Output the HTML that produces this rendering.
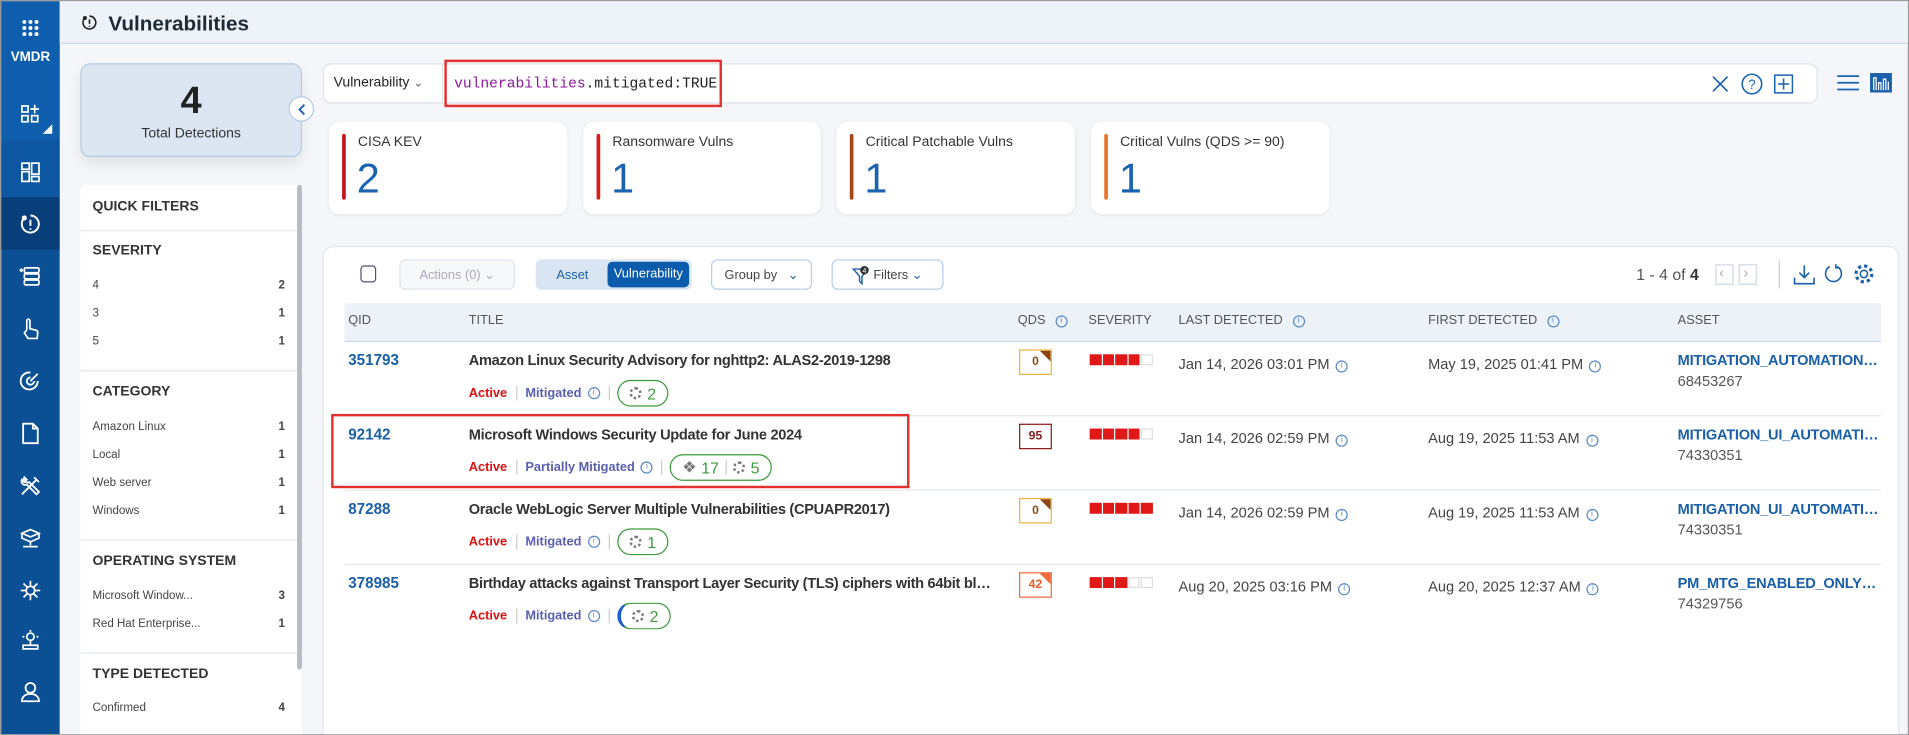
<!DOCTYPE html>
<html><head><meta charset="utf-8"><style>
*{box-sizing:border-box;margin:0;padding:0}
html,body{width:1909px;height:735px;overflow:hidden;background:#f4f6f9}
#w{position:absolute;left:0;top:0;width:1568px;height:604px;transform:scale(1.21747);transform-origin:0 0;font-family:"Liberation Sans",sans-serif;color:#333;background:#f4f6f9;border:1px solid #9a9a9a;overflow:hidden}
.a{position:absolute}
.sb{left:0;top:0;width:48px;height:604px;background:#0b4f94}
.ic{position:absolute;left:14px;width:20px;height:20px}
.hd{left:48px;top:0;width:1520px;height:35px;background:#eef3f9;border-bottom:1px solid #c9d9ec}
.card{background:#fff;border-radius:9px;box-shadow:0 1px 3px rgba(0,0,0,.08)}
.qf{font-size:10px;color:#444}
.qf .h{font-size:11.5px;font-weight:bold;color:#333;position:absolute;left:10px}
.qf .r{position:absolute;left:10px;right:14px;display:flex;justify-content:space-between;font-size:9.5px;color:#444}
.qf .r b{font-weight:bold}
.sep{position:absolute;left:0;right:4px;height:1px;background:#e5e8ec}
.kc .bar{position:absolute;left:11px;top:10px;width:3px;height:54px;border-radius:2px}
.kc .t{position:absolute;left:24px;top:11px;font-size:11.5px;color:#333}
.kc .n{position:absolute;left:23px;top:28px;font-size:34px;color:#1a63b0}
.th{font-size:10.5px;color:#555;position:absolute;top:256px}
.row{position:absolute;left:282px;width:1262px;height:61px;border-bottom:1px solid #e3e7ec}
.row .q{position:absolute;left:3px;top:8px;font-size:12.5px;font-weight:bold;color:#1a5fa8}
.row .ti{position:absolute;left:102px;top:8px;font-size:12px;font-weight:bold;color:#333;white-space:nowrap;letter-spacing:-.25px}
.row .st{position:absolute;left:102px;top:31px;font-size:10.5px;display:flex;align-items:center;white-space:nowrap}
.act{color:#e01010;font-weight:bold}
.mit{color:#5b5fb0;font-weight:bold}
.vs{display:inline-block;width:1px;height:12px;background:#ccc;margin:0 7px}
.pill{display:inline-flex;align-items:center;border:1px solid #3c9a3c;border-radius:12px;height:22px;padding:0 9px;color:#3c9a3c;font-size:13px;margin-left:2px}
.gear{display:inline-block;width:10px;height:10px;border:2px dotted #777;border-radius:50%;margin-right:5px}
.qds{position:absolute;left:554px;top:6px;width:27px;height:21px;border:1px solid;font-size:10px;font-weight:bold;text-align:center;line-height:19px;overflow:hidden}
.sev{position:absolute;left:612px;top:10px;display:flex;gap:1px}
.sev i{display:block;width:9.6px;height:9px;background:#e01818}
.sev i.e{background:#fff;border:1px solid #ddd}
.dt{position:absolute;top:11px;font-size:12px;color:#444;white-space:nowrap}
.inf{display:inline-block;width:10px;height:10px;border:1px solid #5a8ac6;border-radius:50%;font-size:7px;line-height:8px;text-align:center;color:#5a8ac6;margin-left:5px;vertical-align:1px;font-style:normal}
.as{position:absolute;left:1095px;top:8px;font-size:12px;font-weight:bold;color:#1a5fa8;white-space:nowrap;width:166px;overflow:hidden;text-overflow:ellipsis;letter-spacing:-.2px}
.an{position:absolute;left:1095px;top:25px;font-size:12px;color:#555}
.btn{position:absolute;top:212px;height:25px;border:1px solid #b9cde3;border-radius:5px;font-size:10.5px;display:flex;align-items:center;justify-content:center;color:#444;background:#fff}
</style></head><body><div id="w">
<div class="a sb">
 <div class="a" style="left:0;top:0;width:48px;height:115px;background:#0f5eae"></div>
 <div class="a" style="left:0;top:115px;width:48px;height:46px;background:#0c56a2"></div>
 <div class="a" style="left:0;top:161px;width:48px;height:43px;background:#083e7a"></div>
 <svg class="a" style="left:16px;top:14px" width="16" height="16" fill="#fff"><circle cx="3" cy="3" r="1.6"/><circle cx="8" cy="3" r="1.6"/><circle cx="13" cy="3" r="1.6"/><circle cx="3" cy="8" r="1.6"/><circle cx="8" cy="8" r="1.6"/><circle cx="13" cy="8" r="1.6"/><circle cx="3" cy="13" r="1.6"/><circle cx="8" cy="13" r="1.6"/><circle cx="13" cy="13" r="1.6"/></svg>
 <div class="a" style="left:0;top:40px;width:48px;text-align:center;color:#fff;font-weight:bold;font-size:11px">VMDR</div>
 <svg class="ic" style="top:83px" viewBox="0 0 20 20" fill="none" stroke="#fff" stroke-width="1.4"><rect x="3" y="3" width="5" height="5"/><rect x="3" y="11" width="5" height="5"/><rect x="11" y="11" width="5" height="5"/><path d="M13.5 2v7M10 5.5h7"/></svg>
 <svg class="a" style="left:34px;top:101px" width="8" height="8"><path d="M8 0V8H0Z" fill="#fff"/></svg>
 <svg class="ic" style="top:130px" viewBox="0 0 20 20" fill="none" stroke="#fff" stroke-width="1.4"><rect x="3" y="3" width="6" height="5"/><rect x="3" y="10" width="6" height="8"/><rect x="11" y="3" width="6" height="9"/><rect x="11" y="14" width="6" height="4"/></svg>
 <svg class="ic" style="top:173px" viewBox="0 0 20 20" fill="none" stroke="#fff" stroke-width="1.6"><path d="M5 5A7 7 0 1 0 10 3"/><circle cx="5" cy="5" r="1.3" fill="#fff"/><path d="M10 6.5v5M10 13.5v1.2"/></svg>
 <svg class="ic" style="top:216px" viewBox="0 0 20 20" fill="none" stroke="#fff" stroke-width="1.4"><rect x="5" y="3" width="12" height="4" rx="1"/><rect x="5" y="8" width="12" height="4" rx="1"/><rect x="5" y="13" width="12" height="4" rx="1"/><path d="M1 5h3M2.5 3.5v3"/></svg>
 <svg class="ic" style="top:259px" viewBox="0 0 20 20" fill="none" stroke="#fff" stroke-width="1.4"><path d="M7 11V3.5a1.3 1.3 0 0 1 2.6 0V10l5 1.2c1 .3 1.5 1 1.4 2L15.5 18H8l-3-4.5 2-2.5"/></svg>
 <svg class="ic" style="top:302px" viewBox="0 0 20 20" fill="none" stroke="#fff" stroke-width="1.5"><path d="M16 10a7 7 0 1 1-6-7"/><path d="M13 10a3 3 0 1 1-3-3"/><path d="M10 10l6-6"/></svg>
 <svg class="ic" style="top:345px" viewBox="0 0 20 20" fill="none" stroke="#fff" stroke-width="1.5"><path d="M4 2h8l4 4v12H4z"/><path d="M12 2v4h4"/></svg>
 <svg class="ic" style="top:388px" viewBox="0 0 20 20" fill="none" stroke="#fff" stroke-width="1.5"><path d="M3 17L12 8M5 3a3 3 0 0 0 4 4l8 8-2 2-8-8a3 3 0 0 1-4-4l2 2 2-2z"/><path d="M13 3l4 4M15 5L9 11"/></svg>
 <svg class="ic" style="top:431px" viewBox="0 0 20 20" fill="none" stroke="#fff" stroke-width="1.4"><path d="M3 6l7-3 7 3-7 3z M3 6v4l7 3 7-3V6"/><path d="M10 13v3M4 17h12"/></svg>
 <svg class="ic" style="top:474px" viewBox="0 0 20 20" fill="none" stroke="#fff" stroke-width="1.4"><circle cx="10" cy="10" r="3.5"/><path d="M10 2v4.5M10 13.5V18M2 10h4.5M13.5 10H18M4.3 4.3l3.2 3.2M12.5 12.5l3.2 3.2M15.7 4.3l-3.2 3.2M7.5 12.5l-3.2 3.2"/></svg>
 <svg class="ic" style="top:515px" viewBox="0 0 20 20" fill="none" stroke="#fff" stroke-width="1.4"><circle cx="10" cy="7" r="3"/><path d="M10 1.5v1.5M5 7H3.5M16.5 7H15M10 10v4M4 14h12v3H4z"/></svg>
 <svg class="ic" style="top:557px" viewBox="0 0 20 20" fill="none" stroke="#fff" stroke-width="1.5"><circle cx="10" cy="7" r="4"/><path d="M3 18c0-4 3-6 7-6s7 2 7 6z"/></svg>
</div>
<div class="a hd">
 <svg class="a" style="left:17px;top:10px" width="15" height="15" viewBox="0 0 20 20" fill="none" stroke="#222" stroke-width="1.8"><path d="M5 5A7 7 0 1 0 10 3"/><circle cx="5" cy="5" r="1.3" fill="#222"/><path d="M10 6.5v5M10 13.5v1.2"/></svg>
 <div class="a" style="left:40px;top:9px;font-size:17px;font-weight:bold;color:#1f2a36">Vulnerabilities</div>
</div>
<div class="a" style="left:65px;top:51px;width:182px;height:77px;background:#dbe6f2;border:1px solid #b6cbe2;border-radius:8px;box-shadow:0 6px 10px rgba(0,0,0,.08)">
 <div class="a" style="left:0;width:180px;top:12px;text-align:center;font-size:31px;font-weight:bold;color:#222">4</div>
 <div class="a" style="left:0;width:180px;top:51px;text-align:center;font-size:11.5px;color:#333">Total Detections</div>
</div>
<div class="a" style="left:236px;top:78px;width:21px;height:21px;border-radius:50%;background:#fff;border:1px solid #b6cbe2"><svg class="a" style="left:6px;top:5px" width="8" height="10"><path d="M6 1L2 5l4 4" fill="none" stroke="#1a5fa8" stroke-width="1.5"/></svg></div>
<div class="a qf" style="left:65px;top:151px;width:182px;height:460px;background:#fff;border-radius:6px 6px 0 0">
 <div class="a" style="left:178px;top:0;width:4px;height:398px;background:#b5bcc4;border-radius:2px"></div>
 <div class="h" style="top:12px">QUICK FILTERS</div>
 <div class="sep" style="top:37px"></div>
 <div class="h" style="top:48px">SEVERITY</div>
 <div class="r" style="top:77px"><span>4</span><b>2</b></div>
 <div class="r" style="top:100px"><span>3</span><b>1</b></div>
 <div class="r" style="top:123px"><span>5</span><b>1</b></div>
 <div class="sep" style="top:152px"></div>
 <div class="h" style="top:164px">CATEGORY</div>
 <div class="r" style="top:193px"><span>Amazon Linux</span><b>1</b></div>
 <div class="r" style="top:216px"><span>Local</span><b>1</b></div>
 <div class="r" style="top:239px"><span>Web server</span><b>1</b></div>
 <div class="r" style="top:262px"><span>Windows</span><b>1</b></div>
 <div class="sep" style="top:291px"></div>
 <div class="h" style="top:303px">OPERATING SYSTEM</div>
 <div class="r" style="top:332px"><span>Microsoft Window...</span><b>3</b></div>
 <div class="r" style="top:355px"><span>Red Hat Enterprise...</span><b>1</b></div>
 <div class="sep" style="top:384px"></div>
 <div class="h" style="top:396px">TYPE DETECTED</div>
 <div class="r" style="top:424px"><span>Confirmed</span><b>4</b></div>
</div>
<div class="a" style="left:264px;top:51px;width:1228px;height:33px;background:#fff;border:1px solid #dde3ea;border-radius:7px">
 <div class="a" style="left:8px;top:9px;font-size:11.5px;color:#222">Vulnerability <span style="color:#666;font-size:10px">&#8964;</span></div>
 <div class="a" style="left:97px;top:0;width:1px;height:31px;background:#dde3ea"></div>
 <svg class="a" style="left:1140px;top:9px" width="14" height="14"><path d="M1 1l12 12M13 1L1 13" stroke="#1a63b0" stroke-width="1.4"/></svg>
 <svg class="a" style="left:1164px;top:7px" width="18" height="18" viewBox="0 0 18 18"><circle cx="9" cy="9" r="8" fill="none" stroke="#1a63b0" stroke-width="1.3"/><text x="9" y="13" text-anchor="middle" font-size="11" font-family="Liberation Sans" fill="#1a63b0">?</text></svg>
 <svg class="a" style="left:1191px;top:8px" width="16" height="16"><rect x=".7" y=".7" width="14.6" height="14.6" fill="none" stroke="#1a63b0" stroke-width="1.3"/><path d="M8 3.5v9M3.5 8h9" stroke="#1a63b0" stroke-width="1.3"/></svg>
</div>
<div class="a" style="left:364px;top:48px;width:228px;height:39px;border:2px solid #e53030"></div>
<div class="a" style="left:372px;top:61px;font-family:'Liberation Mono',monospace;font-size:12px;color:#222"><span style="color:#8a1a9a">vulnerabilities</span>.mitigated:TRUE</div>
<svg class="a" style="left:1508px;top:60px" width="18" height="14"><path d="M0 1.5h18M0 7h18M0 12.5h18" stroke="#1a63b0" stroke-width="1.4"/></svg>
<svg class="a" style="left:1535px;top:59px" width="18" height="16"><rect width="18" height="16" fill="#1a5fa8"/><path d="M3 14V4h2v10M7 14V8h2v6M11 14V5h2v9M15 14V7" stroke="#fff" stroke-width="1" fill="none"/></svg>
<div class="a card kc" style="left:269px;top:99px;width:196px;height:76px"><div class="bar" style="background:#c0141a"></div><div class="t">CISA KEV</div><div class="n">2</div></div>
<div class="a card kc" style="left:478px;top:99px;width:195px;height:76px"><div class="bar" style="background:#d91c1c"></div><div class="t">Ransomware Vulns</div><div class="n">1</div></div>
<div class="a card kc" style="left:686px;top:99px;width:196px;height:76px"><div class="bar" style="background:#a2461e"></div><div class="t">Critical Patchable Vulns</div><div class="n">1</div></div>
<div class="a card kc" style="left:895px;top:99px;width:196px;height:76px"><div class="bar" style="background:#e9722a"></div><div class="t">Critical Vulns (QDS &gt;= 90)</div><div class="n">1</div></div>
<div class="a" style="left:264px;top:201px;width:1295px;height:410px;background:#fff;border:1px solid #e1e6ec;border-radius:9px"></div>
<div class="a" style="left:295px;top:217px;width:13px;height:14px;border:1.3px solid #556;border-radius:3px"></div>
<div class="btn" style="left:327px;width:95px;background:#f6f8fa;border-color:#dfe4ea;color:#aab"><span>Actions (0) &#8964;</span></div>
<div class="btn" style="left:439px;width:128px;background:#d9e5f2;border-color:#d9e5f2;justify-content:flex-start">
 <span style="margin-left:16px;color:#1a5fa8">Asset</span>
 <span class="a" style="left:58px;top:1px;width:67px;height:21px;background:#0b5cad;color:#fff;border-radius:4px;text-align:center;line-height:21px">Vulnerability</span>
</div>
<div class="btn" style="left:583px;width:83px"><span>Group by &nbsp; <span style="color:#1a5fa8">&#8964;</span></span></div>
<div class="btn" style="left:682px;width:92px"><svg width="14" height="16" style="margin-right:3px"><path d="M1 3h12L8 9v6l-2-2V9z" fill="none" stroke="#1a5fa8" stroke-width="1.2"/><circle cx="10" cy="4" r="3.5" fill="#333"/><text x="10" y="6.3" font-size="6" fill="#fff" text-anchor="middle" font-family="Liberation Sans">4</text></svg><span>Filters <span style="color:#1a5fa8">&#8964;</span></span></div>
<div class="a" style="left:1343px;top:217px;font-size:13px;color:#555">1 - 4 of <b style="color:#333">4</b></div>
<div class="a" style="left:1408px;top:216px;width:15px;height:17px;border:1px solid #cfd8e2"></div>
<div class="a" style="left:1427px;top:216px;width:15px;height:17px;border:1px solid #cfd8e2"></div>
<div class="a" style="left:1411px;top:216px;font-size:12px;color:#aab">&lsaquo;</div><div class="a" style="left:1431px;top:216px;font-size:12px;color:#aab">&rsaquo;</div>
<div class="a" style="left:1460px;top:213px;width:1px;height:23px;background:#ccd"></div>
<svg class="a" style="left:1472px;top:216px" width="18" height="17"><path d="M9 1v10M5 7l4 4 4-4M1 11v5h16v-5" fill="none" stroke="#1a5fa8" stroke-width="1.3"/></svg>
<svg class="a" style="left:1497px;top:215px" width="16" height="18"><path d="M11 3a6.5 6.5 0 1 1-6 0M10 1v3h3" fill="none" stroke="#1a5fa8" stroke-width="1.3"/></svg>
<svg class="a" style="left:1521px;top:215px" width="18" height="18" viewBox="0 0 18 18"><circle cx="9" cy="9" r="3" fill="none" stroke="#1a5fa8" stroke-width="1.3"/><circle cx="9" cy="9" r="6.5" fill="none" stroke="#1a5fa8" stroke-width="2.6" stroke-dasharray="2.6 2.5"/></svg>
<div class="a" style="left:282px;top:248px;width:1262px;height:32px;background:#edf2f9;border-bottom:1px solid #c9d9ec"></div>
<div class="th" style="left:285px">QID</div>
<div class="th" style="left:384px">TITLE</div>
<div class="th" style="left:835px">QDS <i class="inf">i</i></div>
<div class="th" style="left:893px">SEVERITY</div>
<div class="th" style="left:967px">LAST DETECTED <i class="inf">i</i></div>
<div class="th" style="left:1172px">FIRST DETECTED <i class="inf">i</i></div>
<div class="th" style="left:1377px">ASSET</div>
<div class="row" style="top:280px">
 <div class="q">351793</div><div class="ti">Amazon Linux Security Advisory for nghttp2: ALAS2-2019-1298</div>
 <div class="st"><span class="act">Active</span><span class="vs"></span><span class="mit">Mitigated</span><i class="inf">i</i><span class="vs" style="margin-right:4px"></span><span class="pill"><span class="gear"></span>2</span></div>
 <div class="qds" style="border-color:#f2b23a;color:#8a4a1a">0<svg class="a" style="right:0;top:0" width="9" height="9"><path d="M0 0h9v9z" fill="#8b4513"/></svg></div>
 <div class="sev"><i></i><i></i><i></i><i></i><i class="e"></i></div>
 <div class="dt" style="left:685px">Jan 14, 2026 03:01 PM<i class="inf">i</i></div>
 <div class="dt" style="left:890px">May 19, 2025 01:41 PM<i class="inf">i</i></div>
 <div class="as">MITIGATION_AUTOMATION_INSTANCE</div><div class="an">68453267</div>
</div>
<div class="row" style="top:341px">
 <div class="q">92142</div><div class="ti">Microsoft Windows Security Update for June 2024</div>
 <div class="st"><span class="act">Active</span><span class="vs"></span><span class="mit">Partially Mitigated</span><i class="inf">i</i><span class="vs" style="margin-right:4px"></span><span class="pill"><span style="color:#777;margin-right:4px">&#10070;</span>17<span class="vs" style="margin:0 5px"></span><span class="gear"></span>5</span></div>
 <div class="qds" style="border-color:#8b1a1a;color:#8b1a1a">95</div>
 <div class="sev"><i></i><i></i><i></i><i></i><i class="e"></i></div>
 <div class="dt" style="left:685px">Jan 14, 2026 02:59 PM<i class="inf">i</i></div>
 <div class="dt" style="left:890px">Aug 19, 2025 11:53 AM<i class="inf">i</i></div>
 <div class="as">MITIGATION_UI_AUTOMATION_HOST</div><div class="an">74330351</div>
</div>
<div class="row" style="top:402px">
 <div class="q">87288</div><div class="ti">Oracle WebLogic Server Multiple Vulnerabilities (CPUAPR2017)</div>
 <div class="st"><span class="act">Active</span><span class="vs"></span><span class="mit">Mitigated</span><i class="inf">i</i><span class="vs" style="margin-right:4px"></span><span class="pill"><span class="gear"></span>1</span></div>
 <div class="qds" style="border-color:#f2b23a;color:#8a4a1a">0<svg class="a" style="right:0;top:0" width="9" height="9"><path d="M0 0h9v9z" fill="#8b4513"/></svg></div>
 <div class="sev"><i></i><i></i><i></i><i></i><i></i></div>
 <div class="dt" style="left:685px">Jan 14, 2026 02:59 PM<i class="inf">i</i></div>
 <div class="dt" style="left:890px">Aug 19, 2025 11:53 AM<i class="inf">i</i></div>
 <div class="as">MITIGATION_UI_AUTOMATION_HOST</div><div class="an">74330351</div>
</div>
<div class="row" style="top:463px;border-bottom:none">
 <div class="q">378985</div><div class="ti" style="width:430px;overflow:hidden;text-overflow:ellipsis">Birthday attacks against Transport Layer Security (TLS) ciphers with 64bit block size</div>
 <div class="st"><span class="act">Active</span><span class="vs"></span><span class="mit">Mitigated</span><i class="inf">i</i><span class="vs" style="margin-right:4px"></span><span class="pill" style="border-left:3px solid #1a5fc8"><span class="gear"></span>2</span></div>
 <div class="qds" style="border-color:#f26a3a;color:#f05a2a">42<svg class="a" style="right:0;top:0" width="9" height="9"><path d="M0 0h9v9z" fill="#f26a3a"/></svg></div>
 <div class="sev"><i></i><i></i><i></i><i class="e"></i><i class="e"></i></div>
 <div class="dt" style="left:685px">Aug 20, 2025 03:16 PM<i class="inf">i</i></div>
 <div class="dt" style="left:890px">Aug 20, 2025 12:37 AM<i class="inf">i</i></div>
 <div class="as">PM_MTG_ENABLED_ONLY_UI_HOST</div><div class="an">74329756</div>
</div>
<div class="a" style="left:271px;top:339px;width:475px;height:61px;border:2px solid #e53030"></div>
</div></body></html>
